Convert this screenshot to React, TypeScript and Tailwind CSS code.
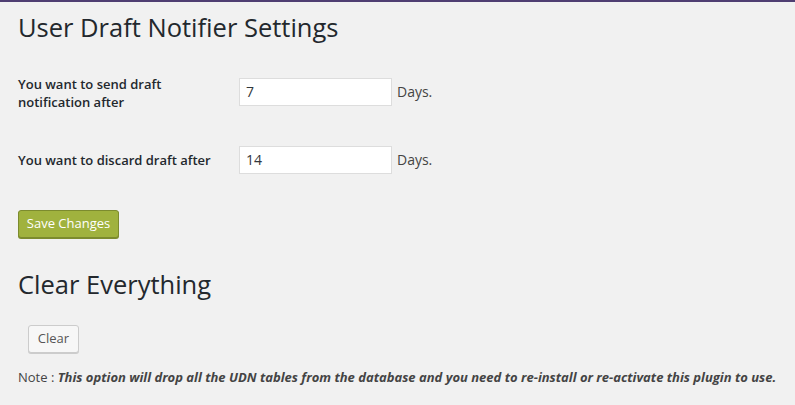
export default function App() {
  return (
    <div className="min-h-[405px] w-[795px] bg-[#f1f1f1] border-t-2 border-[#4f3e72] text-[#23282d]" style={{ fontFamily: '"Open Sans", Lato, sans-serif' }}>
      <div className="pl-[18px] pt-[11px]">
        <h1 className="text-[25.5px] leading-[29px] font-normal">User Draft Notifier Settings</h1>
        <div className="mt-[34px] flex items-start h-[38px]">
          <div className="-mt-[1px] w-[221px] text-[13px] leading-[18px] font-semibold">You want to send draft<br />notification after</div>
          <div className="mt-[2px] w-[153px] h-[28px] bg-white border border-[#dddddd] text-[14px] px-[6px] leading-[26px] text-[#32373c]">7</div>
          <span className="mt-[2px] ml-[5px] text-[14px] leading-[28px] text-[#444]">Days.</span>
        </div>
        <div className="mt-[32px] flex items-center h-[28px]">
          <div className="w-[221px] text-[13px] leading-[18px] font-semibold">You want to discard draft after</div>
          <div className="w-[153px] h-[28px] bg-white border border-[#dddddd] text-[14px] px-[6px] leading-[26px] text-[#32373c]">14</div>
          <span className="ml-[5px] text-[14px] leading-[28px] text-[#444]">Days.</span>
        </div>
        <div className="mt-[36px] h-[29px]">
          <button className="w-[101px] h-[28px] rounded-[3px] bg-[#a0b23e] border border-[#7c8b2e] text-white text-[13px] shadow-[0_1px_0_#7c8b2e]">Save Changes</button>
        </div>
        <h2 className="mt-[31px] text-[25.5px] leading-[29px] font-normal">Clear Everything</h2>
        <div className="mt-[26px] pl-[10px] h-[29px]">
          <button className="w-[51px] h-[28px] rounded-[3px] bg-[#f7f7f7] border border-[#cccccc] text-[#555] text-[13px] shadow-[0_1px_0_#cccccc]">Clear</button>
        </div>
        <p className="mt-[14px] text-[13px] leading-[18px] text-[#444]">Note : <b className="italic font-bold">This option will drop all the UDN tables from the database and you need to re-install or re-activate this plugin to use.</b></p>
      </div>
    </div>
  );
}
